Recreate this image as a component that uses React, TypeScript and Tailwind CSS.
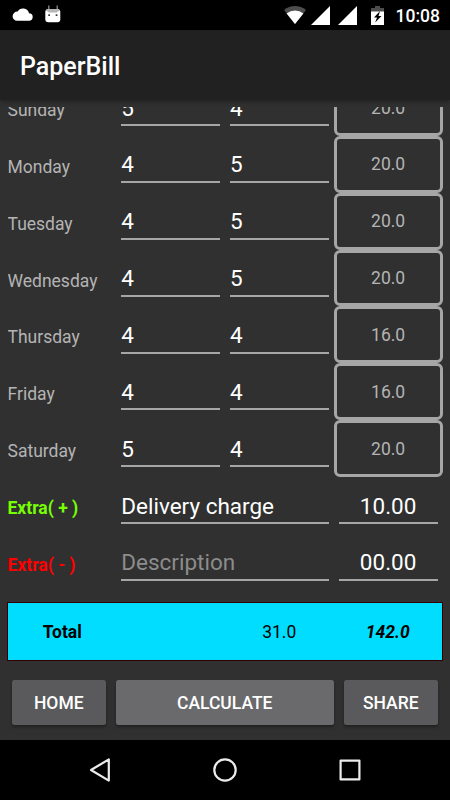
import type { ReactNode } from 'react';

interface DayRow {
  day: string;
  papers: string;
  price: string;
  amount: string;
}

const days: DayRow[] = [
  { day: 'Sunday', papers: '5', price: '4', amount: '20.0' },
  { day: 'Monday', papers: '4', price: '5', amount: '20.0' },
  { day: 'Tuesday', papers: '4', price: '5', amount: '20.0' },
  { day: 'Wednesday', papers: '4', price: '5', amount: '20.0' },
  { day: 'Thursday', papers: '4', price: '4', amount: '16.0' },
  { day: 'Friday', papers: '4', price: '4', amount: '16.0' },
  { day: 'Saturday', papers: '5', price: '4', amount: '20.0' },
];

const StatusBar = () => (
  <div className="flex h-[30px] shrink-0 items-center bg-black pl-[12px] pr-[10px] text-white">
    <svg className="h-[14px] w-[21px]" viewBox="0 0 21 14" fill="currentColor">
      <path d="M17 5.2A6.2 6.2 0 0 0 5.6 3.6 4.9 4.9 0 0 0 .6 8.5 4.5 4.5 0 0 0 5.2 12.8H16.8a3.8 3.8 0 0 0 .2-7.6z" />
    </svg>
    <svg className="ml-[11px] h-[20px] w-[18px]" viewBox="0 0 18 20">
      <path d="M4.800.5v4.500M13.200.5v4.500" stroke="#999" strokeWidth="1.200" />
      <rect x="1.300" y="4" width="15" height="13.200" rx="3" fill="#fff" />
      <path d="M3.500 4h10.600l1.800 1.800-2.200.6-.8 1.100H4.700l-.8-1.100-2.200-.6z" fill="#b5b5b5" />
      <rect x="4.300" y="9.300" width="1.700" height="1.700" fill="#333" />
      <rect x="11.700" y="9.300" width="1.700" height="1.700" fill="#333" />
    </svg>
    <div className="flex-1" />
    <svg className="mt-px h-[19px] w-[22px]" viewBox="0 0 22 19">
      <path d="M0 4a17.500 17.500 0 0 1 22 0L11 18z" fill="#4d4d4d" />
      <path d="M2.600 7.400a14 14 0 0 1 16.800 0L11 18z" fill="#fff" />
    </svg>
    <svg className="mt-px ml-[5px] h-[19px] w-[19px]" viewBox="0 0 19 19" fill="currentColor">
      <path d="M19 0v19H0z" />
    </svg>
    <svg className="mt-px ml-[8px] h-[19px] w-[19px]" viewBox="0 0 19 19" fill="currentColor">
      <path d="M19 0v19H0z" />
    </svg>
    <svg className="ml-[14px] h-[19px] w-[13px]" viewBox="0 0 13 19">
      <path d="M4 0h5v2h4v4H0V2h4z" fill="#4d4d4d" />
      <path d="M0 5.500h13V19H0z" fill="#fff" />
      <path d="M9 5 3 11.500h3L4.200 16.500 10.500 10H7.500z" fill="#000" />
    </svg>
    <span className="mt-[3px] ml-[12px] text-[17.5px] leading-none font-medium">10:08</span>
  </div>
);

const Label = ({ children, className = 'text-[#b4b4b4]' }: { children: ReactNode; className?: string }) => (
  <div className={`pt-[21px] text-[17.5px] leading-[20px] whitespace-pre ${className}`}>{children}</div>
);

const Field = ({ children, className = 'text-white' }: { children: ReactNode; className?: string }) => (
  <div className="px-[5px] pt-[15.6px]">
    <div className={`h-[31.6px] border-b-2 border-[#a6a6a6] text-[22.5px] leading-[27px] ${className}`}>
      {children}
    </div>
  </div>
);

const Button = ({ children, className }: { children: ReactNode; className: string }) => (
  <button
    className={`h-[45px] rounded-[2.5px] pt-[2px] text-[17.5px] font-medium text-white shadow-[0_2px_3px_rgba(0,0,0,0.35)] ${className}`}
  >
    {children}
  </button>
);

export default function App() {
  return (
    <div className="flex h-[800px] w-[450px] flex-col overflow-hidden bg-[#303030] font-['Roboto','Liberation_Sans',sans-serif]">
      <StatusBar />

      {/* App bar */}
      <div className="flex h-[70px] shrink-0 items-center bg-[#212121] pl-[20px] pt-[3px] shadow-[0_1px_5px_rgba(0,0,0,0.4)]">
        <h1 className="text-[25px] leading-none font-medium text-white">PaperBill</h1>
      </div>

      {/* Bill entries, scrolled part of the way down */}
      <div className="mx-[7.5px] mt-[7px] h-[484px] shrink-0 overflow-hidden">
        <div className="-mt-[28px]">
          {days.map((row) => (
            <div key={row.day} className="grid h-[56.85px] grid-cols-4">
              <Label>{row.day}</Label>
              <Field>{row.papers}</Field>
              <Field>{row.price}</Field>
              <div className="flex items-center justify-center rounded-[6px] border-3 border-[#a6a6a6] pt-[0.5px] text-[17.5px] text-[#b4b4b4]">
                {row.amount}
              </div>
            </div>
          ))}
          <div className="grid h-[56.85px] grid-cols-[1fr_2fr_1fr]">
            <Label className="font-bold text-[#76ff03]">Extra( + )</Label>
            <Field>Delivery charge</Field>
            <Field className="text-center text-white">10.00</Field>
          </div>
          <div className="grid h-[56.85px] grid-cols-[1fr_2fr_1fr]">
            <Label className="font-bold text-[#f00]">Extra( - )</Label>
            <Field className="text-[#8c8c8c]">Description</Field>
            <Field className="text-center text-white">00.00</Field>
          </div>
        </div>
      </div>

      {/* Total */}
      <div className="mx-[7px] mt-[11px] grid h-[59px] shrink-0 grid-cols-4 items-center border border-[#300] bg-[#00ddff] pt-px text-center text-[17.5px] text-black">
        <span className="font-bold">Total</span>
        <span className="col-start-3">31.0</span>
        <span className="font-bold italic">142.0</span>
      </div>

      <div className="mt-[19px] mr-[12.5px] ml-[12px] flex shrink-0 gap-[10px]">
        <Button className="w-[93.5px] bg-[#5a595b]">HOME</Button>
        <Button className="flex-1 bg-[#6a696b]">CALCULATE</Button>
        <Button className="w-[93.5px] bg-[#5a595b]">SHARE</Button>
      </div>

      {/* Navigation bar */}
      <div className="mt-auto flex h-[60px] shrink-0 items-center justify-between bg-black px-[88px] text-[#ececec]">
        <svg className="h-6 w-6" viewBox="0 0 24 24" fill="none" stroke="currentColor" strokeWidth="2.2" strokeLinejoin="round">
          <path d="M20.800 1.400v21.200L3 12z" />
        </svg>
        <svg className="h-6 w-6" viewBox="0 0 24 24" fill="none" stroke="currentColor" strokeWidth="2.2">
          <circle cx="12" cy="12" r="10.700" />
        </svg>
        <svg className="h-6 w-6" viewBox="0 0 24 24" fill="none" stroke="currentColor" strokeWidth="2.2" strokeLinejoin="round">
          <rect x="2.600" y="2.600" width="18.800" height="18.800" />
        </svg>
      </div>
    </div>
  );
}
